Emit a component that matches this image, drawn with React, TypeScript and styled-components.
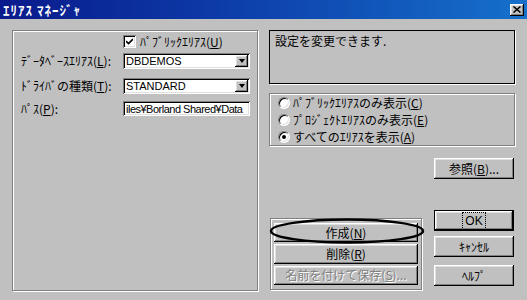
import React from 'react'
import styled, { createGlobalStyle, css } from 'styled-components'

const GlobalStyle = createGlobalStyle`
  html, body {
    margin: 0;
    padding: 0;
    background: #c0c0c0;
  }
  * {
    box-sizing: border-box;
  }
`

const FONT = `"Noto Sans CJK JP", "Liberation Sans", sans-serif`

const raised = css`
  background: #c0c0c0;
  box-shadow: inset -1px -1px #000, inset 1px 1px #fff, inset -2px -2px #808080, inset 2px 2px #dfdfdf;
`

const sunken = css`
  background: #fff;
  box-shadow: inset 1px 1px #808080, inset -1px -1px #fff, inset 2px 2px #000, inset -2px -2px #dfdfdf;
`

const etched = css`
  border: 1px solid #808080;
  box-shadow: 1px 1px 0 #fff, inset 1px 1px 0 #fff;
`

const Window = styled.div`
  width: 527px;
  height: 300px;
  display: flex;
  flex-direction: column;
  background: #c0c0c0;
  font-family: ${FONT};
  font-size: 12px;
  color: #000;
  overflow: hidden;
`

const TitleBar = styled.div`
  height: 19px;
  flex: none;
  display: flex;
  align-items: center;
  justify-content: space-between;
  padding: 0 3px 0 3px;
  background: linear-gradient(to right, #0a1a8c 0%, #0c3aa6 40%, #1670cc 100%);
`

const TitleText = styled.span`
  color: #fff;
  font-weight: bold;
  font-size: 13px;
  letter-spacing: 1px;
  line-height: 19px;
`

const CloseBtn = styled.div`
  ${raised};
  width: 14px;
  height: 12px;
  display: flex;
  align-items: center;
  justify-content: center;
`

const Body = styled.div`
  flex: 1;
  display: flex;
  padding: 11px 0 0 12px;
  gap: 11px;
`

const LeftGroup = styled.div`
  ${etched};
  width: 246px;
  height: 261px;
  padding: 4px 7px 0 8px;
  display: grid;
  grid-template-columns: 102px 127px;
  grid-auto-rows: min-content;
  align-items: center;
`

const FieldLabel = styled.span<{ $mt?: number }>`
  font-size: 12px;
  line-height: 14px;
  white-space: nowrap;
  margin-top: ${({ $mt }) => $mt ?? 0}px;
`

const CheckRow = styled.label`
  grid-column: 2;
  display: flex;
  align-items: center;
  gap: 4px;
  height: 13px;
  line-height: 13px;
  white-space: nowrap;
`

const CheckBox = styled.span`
  ${sunken};
  width: 13px;
  height: 13px;
  flex: none;
  display: flex;
  align-items: center;
  justify-content: center;
`

const Combo = styled.div<{ $mt: number }>`
  ${sunken};
  margin-top: ${({ $mt }) => $mt}px;
  height: 16px;
  display: flex;
  align-items: center;
  padding: 2px 2px 2px 3px;
`

const ComboText = styled.span`
  flex: 1;
  font-family: "Liberation Sans", sans-serif;
  font-size: 11px;
  line-height: 12px;
  white-space: nowrap;
  overflow: hidden;
`

const DropBtn = styled.span`
  ${raised};
  width: 13px;
  height: 12px;
  flex: none;
  display: flex;
  align-items: center;
  justify-content: center;
`

const Arrow = styled.span`
  width: 0;
  height: 0;
  border-left: 3.5px solid transparent;
  border-right: 3.5px solid transparent;
  border-top: 4px solid #000;
`

const EditField = styled.div<{ $mt: number }>`
  ${sunken};
  margin-top: ${({ $mt }) => $mt}px;
  height: 15px;
  padding: 0 2px 0 3px;
  display: flex;
  align-items: center;
  font-family: "Liberation Sans", "Noto Sans CJK JP", sans-serif;
  font-size: 11px;
  letter-spacing: -0.5px;
  line-height: 12px;
  white-space: nowrap;
  overflow: hidden;
`

const RightColumn = styled.div`
  width: 246px;
  display: flex;
  flex-direction: column;
`

const MessageBox = styled.div`
  height: 54px;
  border: 1px solid #000;
  box-shadow: 1px 1px 0 #fff;
  padding: 3px 5px;
  line-height: 14px;
`

const RadioGroup = styled.div`
  ${etched};
  margin-top: 9px;
  height: 53px;
  padding: 0 0 0 8px;
  display: flex;
  flex-direction: column;
`

const RadioRow = styled.label`
  height: 17px;
  display: flex;
  align-items: center;
  gap: 3px;
  white-space: nowrap;
  line-height: 14px;
`

const RadioDot = styled.span<{ $checked?: boolean }>`
  width: 12px;
  height: 12px;
  flex: none;
  border-radius: 50%;
  background: #fff;
  border: 1px solid;
  border-color: #808080 #fff #fff #808080;
  box-shadow: inset 1px 1px #000, inset -1px -1px #dfdfdf;
  display: flex;
  align-items: center;
  justify-content: center;
  &::after {
    content: '';
    display: ${({ $checked }) => ($checked ? 'block' : 'none')};
    width: 4px;
    height: 4px;
    border-radius: 50%;
    background: #000;
  }
`

const Lower = styled.div`
  display: flex;
  margin-top: 12px;
`

const ButtonGroup = styled.div`
  ${etched};
  position: relative;
  margin: 60px 0 0 1px;
  width: 152px;
  height: 72px;
  padding: 4px 3px;
  display: flex;
  flex-direction: column;
  gap: 2px;
`

const Ring = styled.svg`
  position: absolute;
  left: -3px;
  top: -2px;
  pointer-events: none;
`

const SideButtons = styled.div`
  margin-left: 12px;
  width: 80px;
  display: flex;
  flex-direction: column;
`

const Button = styled.button<{ $mt?: number; $h?: number; $default?: boolean }>`
  ${raised};
  border: none;
  margin: ${({ $mt }) => $mt ?? 0}px 0 0 0;
  height: ${({ $h }) => $h ?? 21}px;
  width: 100%;
  padding: 0;
  font-family: ${FONT};
  font-size: 12px;
  line-height: 14px;
  color: #000;
  display: flex;
  align-items: center;
  justify-content: center;
  white-space: nowrap;
  ${({ $default }) =>
    $default &&
    css`
      box-shadow: inset 0 0 0 1px #000, inset -2px -2px #000, inset 2px 2px #fff, inset -3px -3px #808080,
        inset 3px 3px #dfdfdf;
    `}
  &:disabled {
    color: #808080;
    text-shadow: 1px 1px 0 #fff;
  }
`

const FocusText = styled.span`
  outline: 1px dotted #000;
  outline-offset: 1px;
  padding: 0 1px;
  font-family: "Liberation Sans", sans-serif;
`

const options = [
  { label: 'ﾊﾟﾌﾞﾘｯｸｴﾘｱｽのみ表示', key: 'C', checked: false },
  { label: 'ﾌﾟﾛｼﾞｪｸﾄｴﾘｱｽのみ表示', key: 'E', checked: false },
  { label: 'すべてのｴﾘｱｽを表示', key: 'A', checked: true },
]

export default function App() {
  return (
    <Window>
      <GlobalStyle />
      <TitleBar>
        <TitleText>ｴﾘｱｽ ﾏﾈｰｼﾞｬ</TitleText>
        <CloseBtn>
          <svg width="8" height="7" viewBox="0 0 8 7">
            <path d="M0.5 0.5 L7.5 6.5 M7.5 0.5 L0.5 6.5" stroke="#000" strokeWidth="1.5" />
          </svg>
        </CloseBtn>
      </TitleBar>
      <Body>
        <LeftGroup>
          <CheckRow>
            <CheckBox>
              <svg width="7" height="7" viewBox="0 0 7 7">
                <path d="M0 3 L2.5 5.5 L7 1" stroke="#000" strokeWidth="1.6" fill="none" />
              </svg>
            </CheckBox>
            <span>
              ﾊﾟﾌﾞﾘｯｸｴﾘｱｽ(<u>U</u>)
            </span>
          </CheckRow>
          <FieldLabel $mt={5}>
            ﾃﾞｰﾀﾍﾞｰｽｴﾘｱｽ(<u>L</u>):
          </FieldLabel>
          <Combo $mt={5}>
            <ComboText>DBDEMOS</ComboText>
            <DropBtn>
              <Arrow />
            </DropBtn>
          </Combo>
          <FieldLabel $mt={9}>
            ﾄﾞﾗｲﾊﾞの種類(<u>T</u>):
          </FieldLabel>
          <Combo $mt={9}>
            <ComboText>STANDARD</ComboText>
            <DropBtn>
              <Arrow />
            </DropBtn>
          </Combo>
          <FieldLabel $mt={7}>
            ﾊﾟｽ(<u>P</u>):
          </FieldLabel>
          <EditField $mt={7}>iles¥Borland Shared¥Data</EditField>
        </LeftGroup>

        <RightColumn>
          <MessageBox>設定を変更できます.</MessageBox>
          <RadioGroup>
            {options.map((o) => (
              <RadioRow key={o.key}>
                <RadioDot $checked={o.checked} />
                <span>
                  {o.label}(<u>{o.key}</u>)
                </span>
              </RadioRow>
            ))}
          </RadioGroup>
          <Lower>
            <ButtonGroup>
              <Button $h={20}>
                作成(<u>N</u>)
              </Button>
              <Button $h={20}>
                削除(<u>R</u>)
              </Button>
              <Button $h={20} disabled>
                名前を付けて保存(<u>S</u>)...
              </Button>
              <Ring width="158" height="28" viewBox="0 0 158 28">
                <ellipse cx="79" cy="14" rx="76" ry="11.5" fill="none" stroke="#000" strokeWidth="2.5" />
              </Ring>
            </ButtonGroup>
            <SideButtons>
              <Button>
                参照(<u>B</u>)...
              </Button>
              <Button $mt={31} $default>
                <FocusText>OK</FocusText>
              </Button>
              <Button $mt={5}>ｷｬﾝｾﾙ</Button>
              <Button $mt={8}>ﾍﾙﾌﾟ</Button>
            </SideButtons>
          </Lower>
        </RightColumn>
      </Body>
    </Window>
  )
}
